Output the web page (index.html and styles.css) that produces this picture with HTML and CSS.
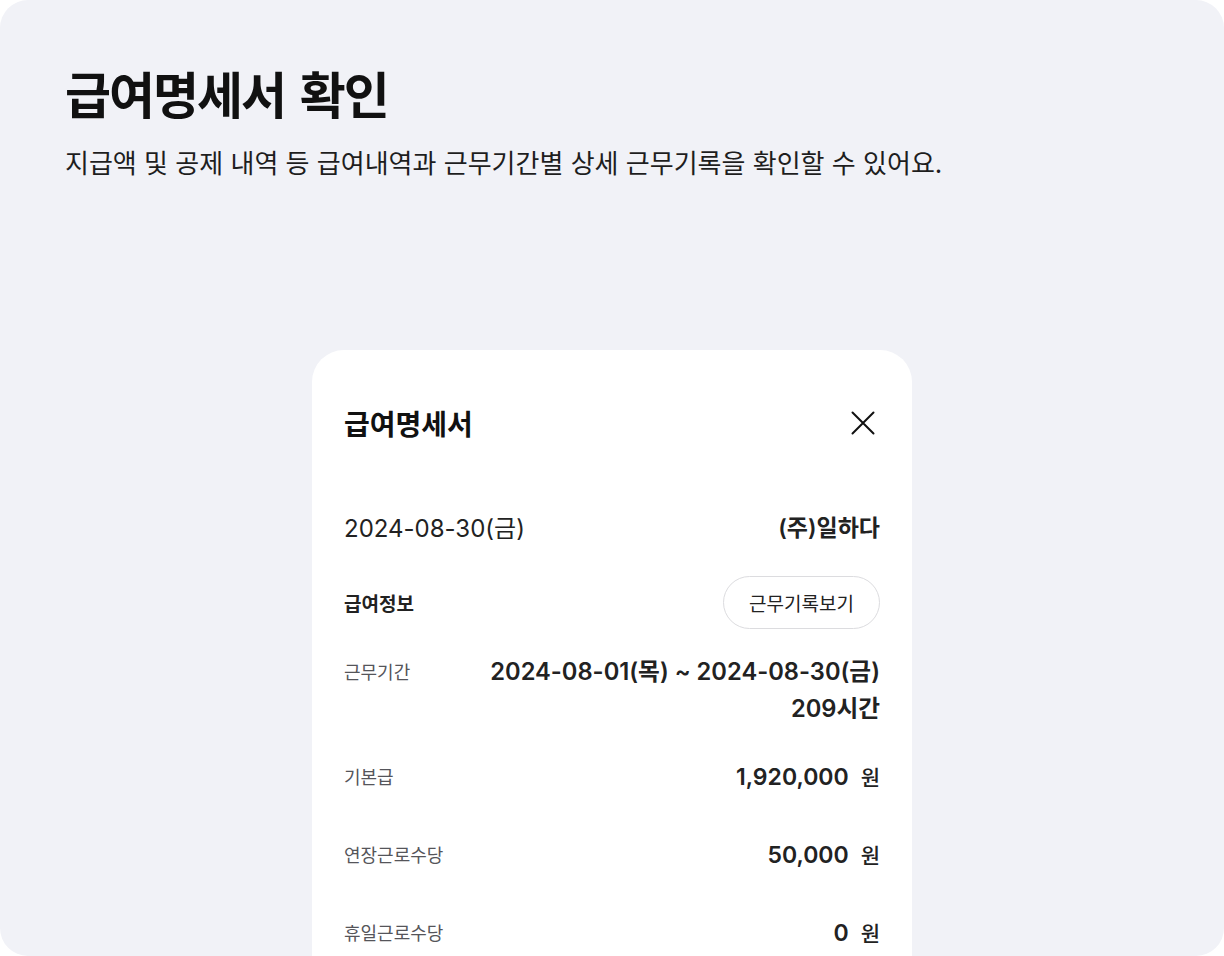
FILE: index.html
```html
<!DOCTYPE html>
<html lang="ko">
<head>
  <meta charset="UTF-8" />
  <title>급여명세서 확인</title>
  <meta name="viewport" content="width=device-width, initial-scale=1.0" />
  <link rel="stylesheet" href="styles.css">
</head>
<body>

<div class="page">
  <h1 class="page-title">급여명세서 확인</h1>
  <p class="page-desc">지급액 및 공제 내역 등 급여내역과 근무기간별 상세 근무기록을 확인할 수 있어요.</p>

  <div class="card">
    <div class="card-head">
      <h2>급여명세서</h2>
      <button class="close" aria-label="닫기">
        <svg width="32" height="32" viewBox="0 0 32 32" fill="none" stroke="#111" stroke-width="2" stroke-linecap="round">
          <path d="M5.5 5.5L26.5 26.5M26.5 5.5L5.5 26.5" />
        </svg>
      </button>
    </div>

    <div class="row row-date">
      <span>2024-08-30(금)</span>
      <strong>(주)일하다</strong>
    </div>

    <div class="row row-info">
      <span class="section">급여정보</span>
      <button class="pill">근무기록보기</button>
    </div>

    <div class="row row-period">
      <span class="label">근무기간</span>
      <div class="value">
        <div>2024-08-01(목) ~ 2024-08-30(금)</div>
        <div>209시간</div>
      </div>
    </div>

    <div class="row row-pay">
      <span class="label">기본급</span>
      <span class="value">1,920,000<span class="won">원</span></span>
    </div>
    <div class="row row-pay">
      <span class="label">연장근로수당</span>
      <span class="value">50,000<span class="won">원</span></span>
    </div>
    <div class="row row-pay">
      <span class="label">휴일근로수당</span>
      <span class="value">0<span class="won">원</span></span>
    </div>
  </div>
</div>

</body>
</html>
```

FILE: styles.css
```css
html, body {
  margin: 0;
  padding: 0;
  background: #fff;
  font-family: Inter, "Noto Sans CJK KR", sans-serif;
  color: #222;
  height: 100%;
  overflow: hidden;
}

.page {
  height: 100vh;
  box-sizing: border-box;
  padding: 0 65px;
  background: #f1f2f7;
  border-radius: 28px;
  overflow: hidden;
}

.page-title {
  margin: 0;
  padding-top: 64px;
  font-size: 50px;
  line-height: 64px;
  font-weight: 700;
  letter-spacing: -0.04em;
  word-spacing: 5px;
  color: #111;
}

.page-desc {
  margin: 19px 0 0;
  font-size: 26px;
  line-height: 34px;
  color: #1e1e1e;
}

.card {
  width: 600px;
  box-sizing: border-box;
  margin: 169px auto 0;
  padding: 48px 32px;
  background: #fff;
  border-radius: 32px;
}

.card-head {
  height: 50px;
  display: flex;
  align-items: center;
  justify-content: space-between;
}

.card-head h2 {
  margin: 0;
  font-size: 28px;
  font-weight: 700;
  color: #111;
}

.close {
  border: 0;
  background: none;
  padding: 0;
  margin-right: 1px;
  width: 32px;
  height: 32px;
  cursor: pointer;
}
.close svg { display: block; }

.row {
  display: flex;
  justify-content: space-between;
  align-items: center;
}

.row-date {
  margin-top: 58px;
  height: 40px;
  font-size: 24px;
}
.row-date strong {
  font-size: 23px;
  font-weight: 600;
}

.row-info {
  margin-top: 30px;
}
.section {
  font-size: 19px;
  font-weight: 700;
}
.pill {
  height: 53px;
  padding: 0 25px;
  border: 1px solid #dcdcdf;
  border-radius: 27px;
  background: #fff;
  font-family: inherit;
  font-size: 19px;
  color: #222;
}

.label {
  font-size: 18px;
  color: #55555a;
}

.value {
  font-size: 23px;
  font-weight: 600;
  text-align: right;
}

.row-period {
  margin-top: 24px;
  align-items: flex-start;
}
.row-period .label { line-height: 40px; }
.row-period .value {
  font-size: 23.7px;
  line-height: 37px;
}

.row-pay {
  height: 40px;
  margin-top: 38px;
}
.row-period + .row-pay { margin-top: 29px; }

.won {
  margin-left: 12px;
  font-size: 21px;
  font-weight: 500;
}
```
